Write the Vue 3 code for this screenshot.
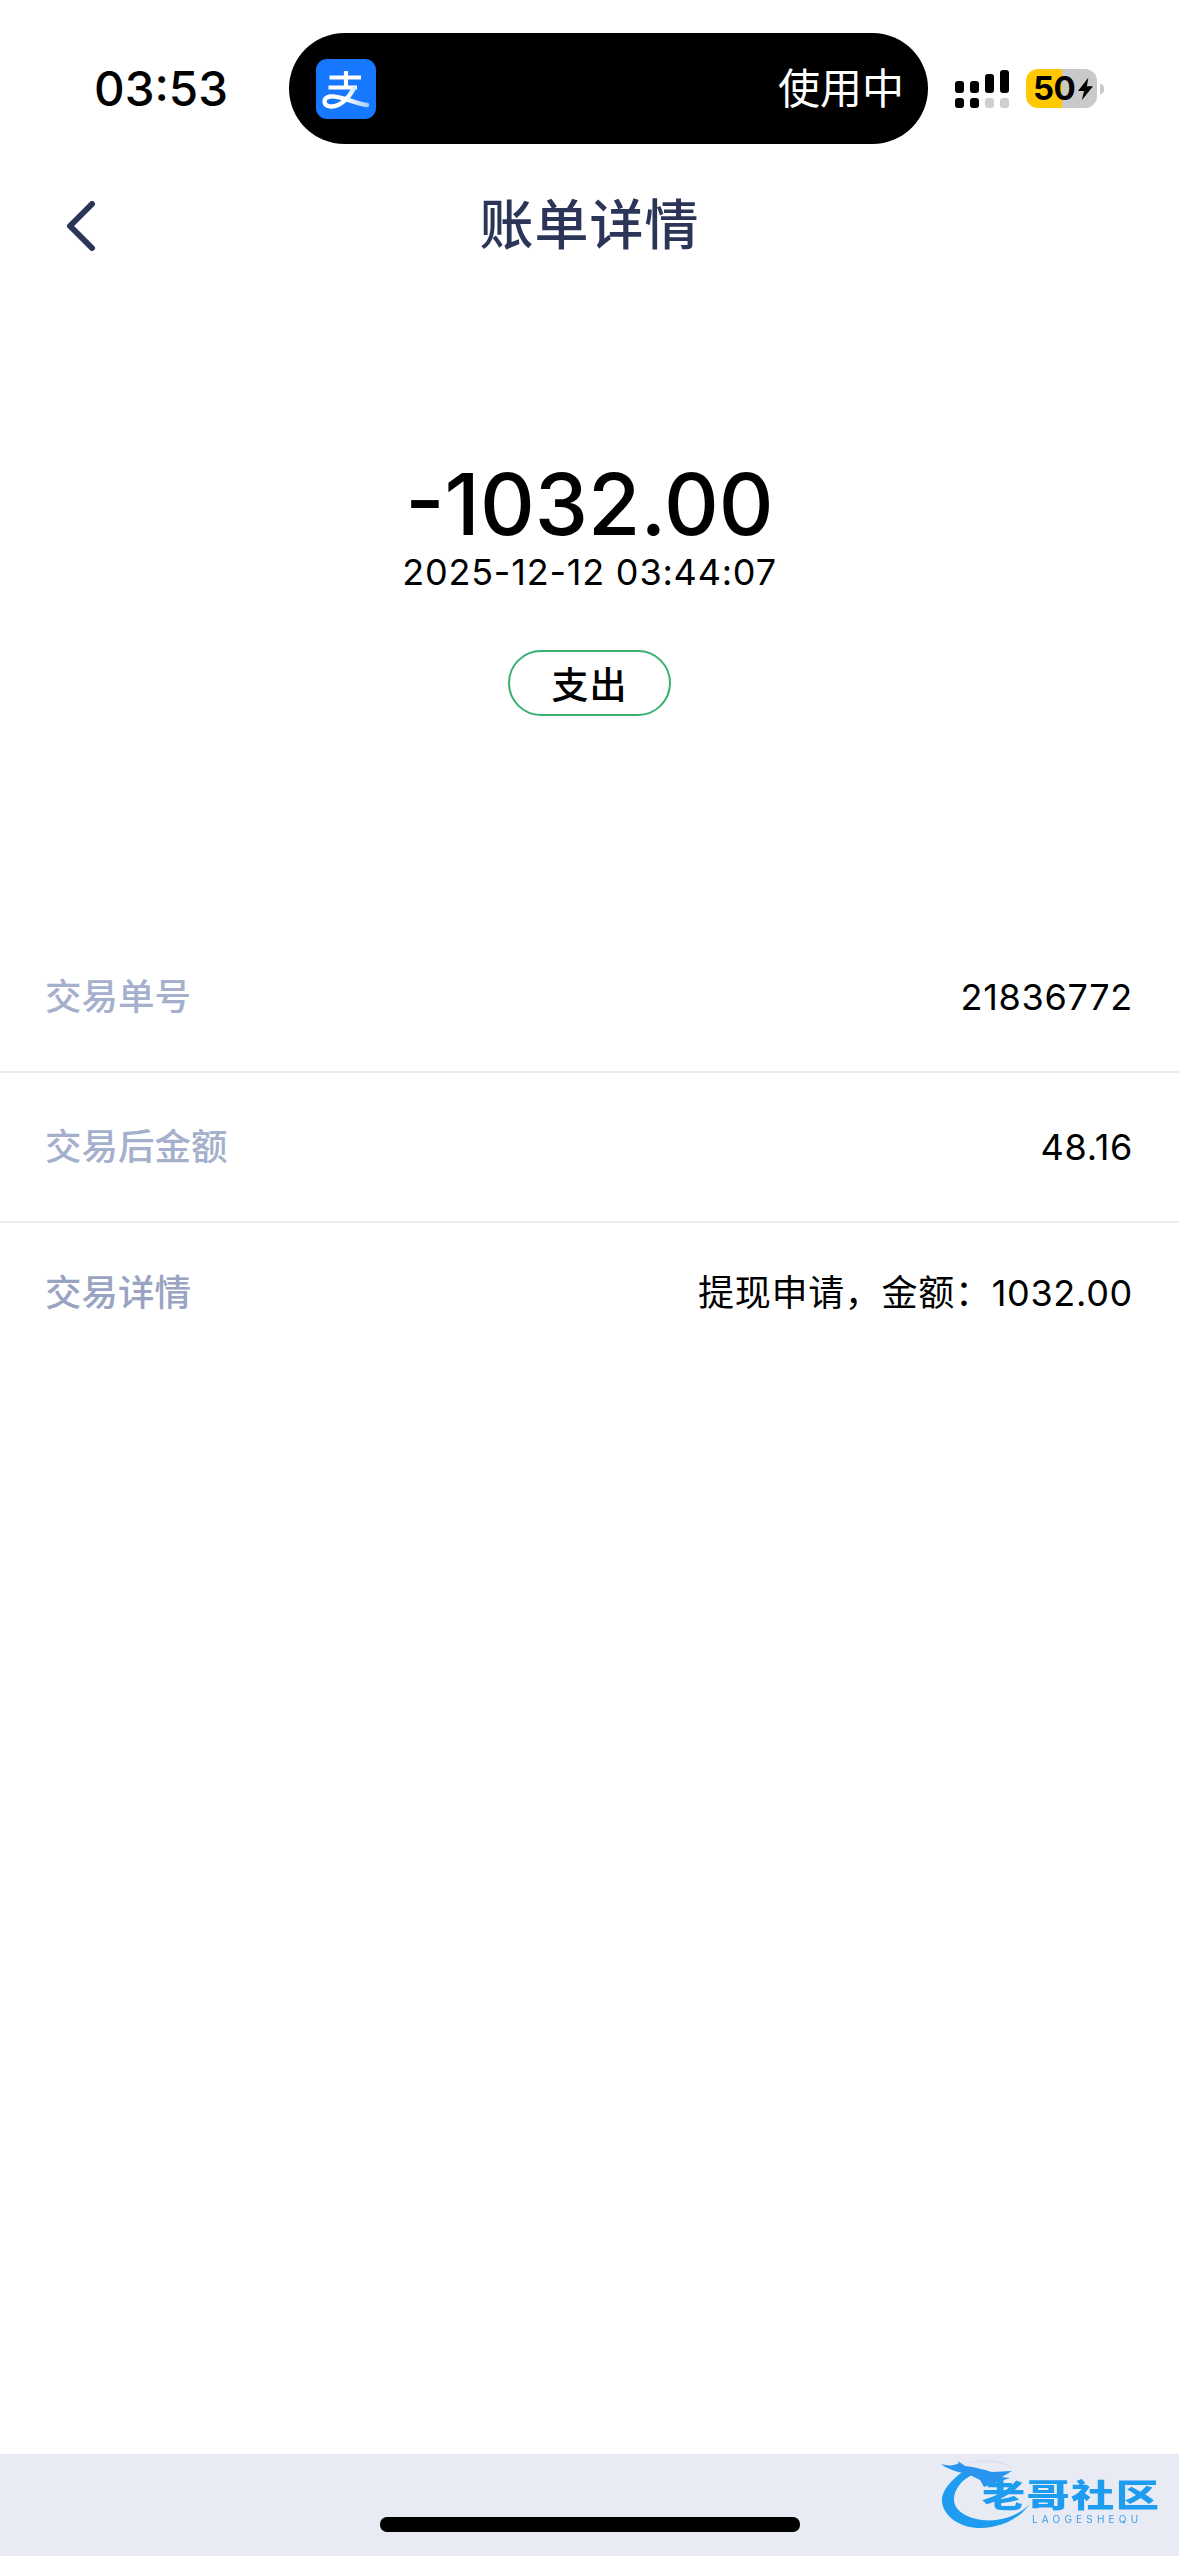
<script setup>
const rows = [
  { label: '交易单号', value: '21836772' },
  { label: '交易后金额', value: '48.16' },
  { label: '交易详情', value: '提现申请，金额：1032.00' },
]
const signalBars = [12, 12, 19, 23]
</script>

<template>
  <div class="page">
    <header class="status">
      <span class="time">03:53</span>
      <div class="island">
        <svg class="alipay" viewBox="0 0 60 60" aria-hidden="true">
          <defs>
            <linearGradient id="sw" x1="0" x2="1" y1="0" y2="0">
              <stop offset="0.5" stop-color="#fff" />
              <stop offset="1" stop-color="#a9cdfb" />
            </linearGradient>
          </defs>
          <rect width="60" height="60" rx="11" fill="#1677ff" />
          <path d="M13.500 18.500H45M30 12V29M12.500 28.500H41" stroke="#fff" stroke-width="4.200" fill="none" />
          <path d="M38 29C33 39 24 48 15 47.500C7 47 6 39 14 37.500C24 36 36 44 51 46" stroke="url(#sw)" stroke-width="4.400" fill="none" stroke-linecap="round" />
        </svg>
        <span class="in-use">使用中</span>
      </div>
      <div class="signal" aria-hidden="true">
        <div v-for="(h, i) in signalBars" :key="i" class="sig-col">
          <i class="sig-top" :style="{ height: h + 'px' }"></i>
          <i class="sig-bottom" :class="{ off: i > 1 }"></i>
        </div>
      </div>
      <div class="battery">
        <div class="batt-body">
          <span class="batt-num">50</span>
          <svg class="bolt" viewBox="0 0 16 24" aria-hidden="true">
            <path d="M11 0 0 14H6.500L4 24 16 9H9.500Z" fill="#000" />
          </svg>
        </div>
        <i class="batt-cap"></i>
      </div>
    </header>

    <nav class="nav">
      <svg class="back" viewBox="0 0 30 50" aria-hidden="true">
        <path d="M26 3 4 25 26 47" fill="none" stroke="#2b3557" stroke-width="6" stroke-linecap="round" stroke-linejoin="round" />
      </svg>
      <h1 class="title">账单详情</h1>
      <span></span>
    </nav>

    <section class="hero">
      <div class="amount">-1032.00</div>
      <div class="date">2025-12-12 03:44:07</div>
      <div class="pill">支出</div>
    </section>

    <section class="list">
      <div v-for="row in rows" :key="row.label" class="row">
        <span class="label">{{ row.label }}</span>
        <span class="value">{{ row.value }}</span>
      </div>
    </section>

    <footer class="foot">
      <div class="home"></div>
      <div class="mark">
        <svg class="dragon" viewBox="0 0 92 70" aria-hidden="true">
          <path d="M24 11C8 22 1 33 2 42C4 58 22 68 40 68C60 68 78 60 90 44C78 56 60 62 42 60C26 58 13 50 14 38C15 28 22 20 32 15Z" fill="#1e9df0" />
          <path d="M1 4C8 6 14 6 19 3L18 1L25 6C35 7 45 10 52 12L72 11L62 17L70 18L52 24L44 27L40 20L28 14L18 12C12 10 6 8 1 4Z" fill="#2a95ee" />
          <path d="M29 3C45 -1 62 1 72 8" fill="none" stroke="#d3dbea" stroke-width="1" />
        </svg>
        <div class="mark-name">老哥社区</div>
        <div class="mark-sub">LAOGESHEQU</div>
      </div>
    </footer>
  </div>
</template>

<style>
html, body { margin: 0; background: #fff; }
</style>

<style scoped>
.page {
  width: 1179px;
  height: 2556px;
  display: flex;
  flex-direction: column;
  background: #fff;
  overflow: hidden;
  font-family: Inter, "Noto Sans CJK SC", sans-serif;
  color: #000;
}
.status {
  display: flex;
  align-items: center;
  padding: 33px 0 0 94px;
}
.time {
  width: 195px;
  font-size: 47.500px;
  font-weight: 500;
  line-height: 111px;
}
.island {
  width: 639px;
  height: 111px;
  border-radius: 56px;
  background: #000;
  display: flex;
  align-items: center;
  justify-content: space-between;
  padding: 0 24px 0 27px;
  box-sizing: border-box;
}
.alipay { width: 60px; height: 60px; }
.in-use { color: #fff; font-size: 42px; line-height: 1; }
.signal {
  margin-left: 27px;
  display: flex;
  gap: 6px;
}
.sig-col {
  display: flex;
  flex-direction: column;
  justify-content: flex-end;
  gap: 5px;
  width: 9px;
}
.sig-top, .sig-bottom { display: block; background: #000; border-radius: 3px; }
.sig-bottom { height: 10px; }
.sig-bottom.off { background: #cfcfcf; }
.battery {
  margin-left: 17px;
  display: flex;
  align-items: center;
  gap: 3px;
}
.batt-body {
  width: 71px;
  height: 39px;
  border-radius: 12px;
  background: linear-gradient(90deg, #ffc800 0 36px, #c9c9c9 36px);
  display: flex;
  align-items: center;
  padding-left: 7px;
  box-sizing: border-box;
}
.batt-num { font-size: 33px; font-weight: 700; line-height: 1; letter-spacing: -0.5px; }
.bolt { width: 15px; height: 24px; margin-left: 3px; flex: none; }
.batt-cap {
  width: 4px;
  height: 10px;
  background: #c9c9c9;
  border-radius: 0 4px 4px 0;
}
.nav {
  display: grid;
  grid-template-columns: 1fr auto 1fr;
  align-items: center;
  height: 90px;
  margin-top: 37px;
  padding-left: 66px;
  padding-right: 66px;
}
.back { width: 30px; height: 50px; }
.title {
  margin: 0;
  font-size: 54px;
  font-weight: 500;
  line-height: 90px;
  color: #2b3557;
  letter-spacing: 1px;
}
.hero {
  display: flex;
  flex-direction: column;
  align-items: center;
  padding-top: 187px;
}
.amount {
  font-size: 85px;
  font-weight: 500;
  line-height: 94px;
}
.date {
  font-size: 36px;
  line-height: 40px;
  letter-spacing: 0.8px;
}
.pill {
  margin-top: 58px;
  width: 163px;
  height: 66px;
  box-sizing: border-box;
  border: 2px solid #37b072;
  border-radius: 33px;
  display: flex;
  align-items: center;
  justify-content: center;
  font-size: 37px;
  font-weight: 500;
  letter-spacing: 1px;
}
.list {
  margin-top: 207px;
  display: flex;
  flex-direction: column;
}
.row {
  display: flex;
  align-items: center;
  justify-content: space-between;
  height: 150px;
  padding: 0 46px 0 45px;
  border-bottom: 2px solid #ebebf4;
  box-sizing: border-box;
}
.row:last-child { border-bottom: 0; height: 140px; }
.row:last-child .label { color: #98a4c2; }
.label { font-size: 36.500px; font-weight: 500; color: #a4b0cc; line-height: 1; }
.value { font-size: 36px; line-height: 1; letter-spacing: 0.7px; }
.foot {
  margin-top: auto;
  height: 102px;
  background: #e8ebf4;
  position: relative;
  display: flex;
  justify-content: center;
}
.home {
  width: 420px;
  height: 15px;
  margin-top: 63px;
  border-radius: 7px;
  background: #000;
}
.mark {
  position: absolute;
  left: 940px;
  top: 6px;
  width: 228px;
  height: 70px;
  filter: blur(0.7px);
}
.dragon {
  position: absolute;
  left: 0;
  top: 0;
  width: 92px;
  height: 70px;
}
.mark-name {
  position: absolute;
  left: 42px;
  top: 20px;
  font-size: 32px;
  font-weight: 900;
  line-height: 32px;
  letter-spacing: 1px;
  color: #1d9cf0;
  white-space: nowrap;
  transform: scaleX(1.35);
  transform-origin: left center;
}
.mark-sub {
  position: absolute;
  left: 92px;
  top: 54px;
  font-size: 10px;
  line-height: 10px;
  letter-spacing: 4.200px;
  color: #3a9fe8;
  white-space: nowrap;
}
</style>
